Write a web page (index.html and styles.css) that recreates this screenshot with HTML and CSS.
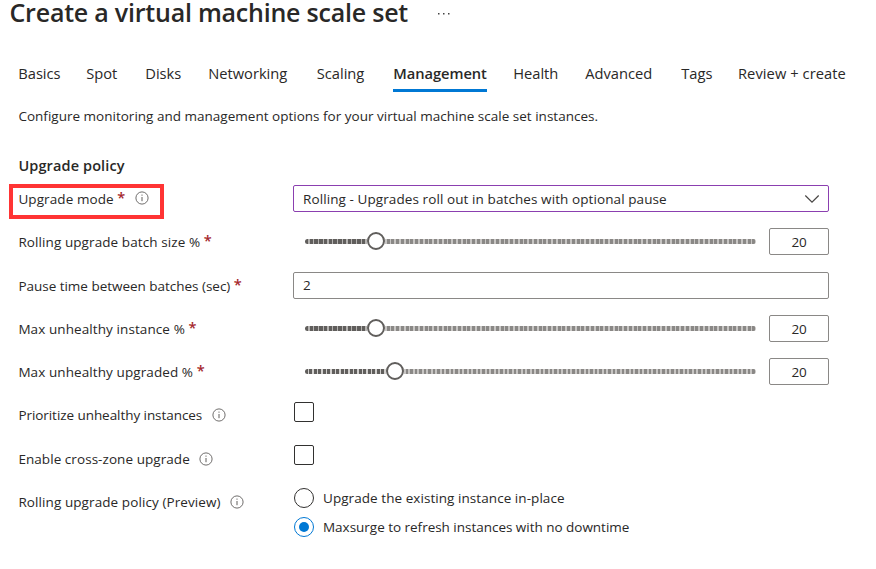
FILE: index.html
```
<!DOCTYPE html>
<html lang="en">
<head>
<meta charset="utf-8">
<title>Create a virtual machine scale set</title>
<link rel="stylesheet" href="styles.css">
</head>
<body>
<svg class="defs" width="0" height="0" aria-hidden="true">
  <symbol id="info" viewBox="0 0 14 14"><circle cx="7" cy="7" r="6.1" fill="none" stroke="#605e5c" stroke-width=".9"/><path d="M7 6v4.2" stroke="#605e5c" stroke-width="1"/><circle cx="7" cy="4.1" r=".65" fill="#605e5c"/></symbol>
</svg>
<header class="header">
  <h1 class="title">Create a virtual machine scale set</h1>
  <svg class="more" viewBox="0 0 14 4"><g fill="#444"><rect x="0" y="1" width="1.5" height="1.5"/><rect x="5" y="1" width="1.5" height="1.5"/><rect x="10" y="1" width="1.5" height="1.5"/></g></svg>
</header>
<nav class="tabs">
  <a class="tab">Basics</a><a class="tab">Spot</a><a class="tab">Disks</a><a class="tab">Networking</a><a class="tab">Scaling</a><a class="tab active">Management</a><a class="tab">Health</a><a class="tab">Advanced</a><a class="tab">Tags</a><a class="tab last">Review + create</a>
</nav>
<p class="intro">Configure monitoring and management options for your virtual machine scale set instances.</p>
<h2 class="section">Upgrade policy</h2>
<main class="form">
  <div class="row">
    <div class="label highlighted">Upgrade mode<b class="req">*</b><svg class="info"><use href="#info"/></svg></div>
    <div class="field select"><span>Rolling - Upgrades roll out in batches with optional pause</span><svg class="chevron" viewBox="0 0 16 10"><path d="M1.3 1.5 8 8.2l6.7-6.7" fill="none" stroke="#484644" stroke-width="1.2"/></svg></div>
  </div>
  <div class="row">
    <div class="label">Rolling upgrade batch size %<b class="req">*</b></div>
    <div class="range"><div class="slider"><i class="fill"></i><i class="thumb"></i><i class="rest"></i></div><div class="field number">20</div></div>
  </div>
  <div class="row">
    <div class="label snug lower">Pause time between batches (sec)<b class="req">*</b></div>
    <div class="field">2</div>
  </div>
  <div class="row">
    <div class="label">Max unhealthy instance %<b class="req">*</b></div>
    <div class="range"><div class="slider"><i class="fill"></i><i class="thumb"></i><i class="rest"></i></div><div class="field number">20</div></div>
  </div>
  <div class="row">
    <div class="label">Max unhealthy upgraded %<b class="req">*</b></div>
    <div class="range"><div class="slider wide"><i class="fill"></i><i class="thumb"></i><i class="rest"></i></div><div class="field number">20</div></div>
  </div>
  <div class="row">
    <div class="label tight">Prioritize unhealthy instances<svg class="info"><use href="#info"/></svg></div>
    <div class="check"></div>
  </div>
  <div class="row">
    <div class="label even lower">Enable cross-zone upgrade<svg class="info"><use href="#info"/></svg></div>
    <div class="check"></div>
  </div>
  <div class="row radios">
    <div class="label">Rolling upgrade policy (Preview)<svg class="info"><use href="#info"/></svg></div>
    <div class="options">
      <div class="option"><i class="radio"></i><span class="even">Upgrade the existing instance in-place</span></div>
      <div class="option"><i class="radio on"></i><span class="snug">Maxsurge to refresh instances with no downtime</span></div>
    </div>
  </div>
</main>
</body>
</html>
```
FILE: styles.css
```
* { box-sizing: border-box; }
body {
  margin: 0;
  height: 569px;
  overflow: hidden;
  background: #fff;
  color: #292827;
  font: 13.5px/20px "Open Sans", "Noto Sans", sans-serif;
  letter-spacing: .09px;
}
.defs { display: block; height: 0; }
.header { display: flex; height: 59px; padding-left: 9.5px; }
.title {
  margin: 0;
  width: 428px;
  font-size: 25px;
  line-height: 24px;
  font-weight: 600;
  letter-spacing: -.22px;
  white-space: nowrap;
}
.more { width: 14px; height: 4px; margin-top: 12px; }
.tabs {
  display: grid;
  grid-template-columns: 68px 59px 63px 108.5px 76.5px 120px 72px 96px 56.7px auto;
  height: 33px;
  padding-left: 18.3px;
  font-size: 14.7px;
  line-height: 29px;
  letter-spacing: -.03px;
  white-space: nowrap;
}
.tab { justify-self: start; height: 33px; }
.tab.active { font-weight: 600; letter-spacing: -.06px; border-bottom: 3px solid #0078d4; }
.tab.last { letter-spacing: .06px; }
.intro { margin: 14px 0 0 18.4px; letter-spacing: .01px; }
.section { margin: 30px 0 0 18.4px; font-size: 14.5px; line-height: 20px; font-weight: 600; letter-spacing: .12px; }
.form { padding: 1px 0 0 18px; }
.row { display: grid; grid-template-columns: 275px 536px; height: 43.3px; align-items: center; }
.label { display: flex; align-items: center; position: relative; height: 22px; padding-left: .4px; white-space: nowrap; }
.highlighted::after { content: ""; box-sizing: border-box; position: absolute; left: -9px; top: -4px; width: 155px; height: 35px; border: 4px solid #ff3434; }
.lower { margin-top: 1.4px; }
.req { margin: -2px 0 0 3.5px; width: 8.5px; color: #a4262c; font-size: 14.5px; font-weight: 600; }
.info { width: 14px; height: 14px; margin: -1px 0 0 9.5px; }
.field {
  display: flex;
  align-items: center;
  height: 27px;
  padding: 0 9px;
  border: 1px solid #8a8886;
  border-radius: 2px;
  background: #fff;
}
.select { justify-content: space-between; padding-right: 8px; border-color: #8b3fb0; }
.chevron { width: 16px; height: 10px; }
.number { width: 60px; justify-content: center; letter-spacing: -.2px; }
.range { display: grid; grid-template-columns: 451px 60px; column-gap: 13px; padding-left: 12px; align-items: center; }
.slider { display: grid; grid-template-columns: 62px 18px 1fr; align-items: center; height: 18px; margin-top: -1px; }
.slider.wide { grid-template-columns: 81px 18px 1fr; }
.fill, .rest { height: 5px; }
.fill { border-radius: 3px 0 0 3px; background: repeating-linear-gradient(90deg, #605e5c 0 3.4px, #b5b3b1 3.4px 4.75px); }
.rest { border-radius: 0 3px 3px 0; background: repeating-linear-gradient(90deg, #c8c6c4 0 1.6px, #8a8886 1.6px 4.75px); }
.wide .fill { background: repeating-linear-gradient(90deg, #605e5c 0 2.8px, #d2d0ce 2.8px 4.5px); }
.wide .rest { background: repeating-linear-gradient(90deg, #c8c6c4 0 1.8px, #8a8886 1.8px 4.5px); }
.thumb { width: 18px; height: 18px; border: 2px solid #605e5c; border-radius: 50%; background: #fff; }
.check { width: 20px; height: 20px; margin: -7px 0 0 1px; border: 1px solid #323130; border-radius: 2px; }
.radios { align-items: start; }
.radios .label { margin-top: 11px; }
.options { padding: 4px 0 0 1px; }
.option { display: flex; align-items: center; gap: 9px; height: 28.5px; }
.radio { display: grid; place-items: center; width: 20px; height: 20px; border: 1px solid #323130; border-radius: 50%; }
.radio.on { border-color: #0078d4; }
.radio.on::after { content: ""; width: 10px; height: 10px; border-radius: 50%; background: #0078d4; }
.snug { letter-spacing: -.02px; }
.even { letter-spacing: .06px; }
.tight { letter-spacing: -.06px; }
```
